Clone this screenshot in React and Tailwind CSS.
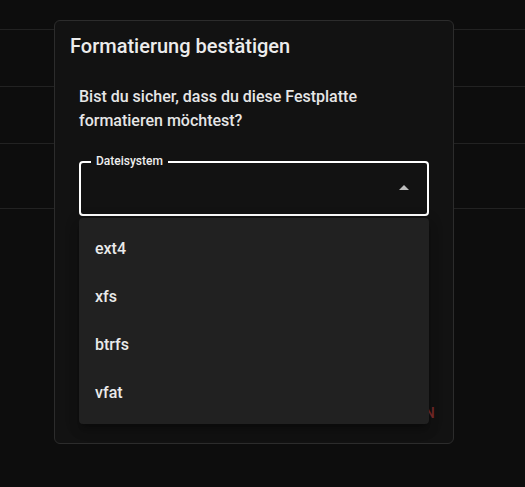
import React from 'react';

const options = ['ext4', 'xfs', 'btrfs', 'vfat'];

function BackgroundRows() {
  return (
    <div className="w-full">
      <div className="h-[30px] border-b border-[#222222]" />
      <div className="h-[57px] border-b border-[#222222]" />
      <div className="h-[57px] border-b border-[#222222]" />
      <div className="h-[65px] border-b border-[#222222]" />
    </div>
  );
}

function Dialog() {
  return (
    <div className="absolute left-[54px] top-[20px] w-[400px] h-[424px] rounded-[6px] border border-[#2c2c2c] bg-[#121212] flex flex-col">
      <h2 className="pl-[15px] pt-[12px] text-[20px] leading-[26px] text-[#ececec] font-medium">
        Formatierung bestätigen
      </h2>
      <p className="pl-[24px] pr-[24px] mt-[26px] text-[16px] leading-[24px] text-[#e6e6e6] font-medium">
        Bist du sicher, dass du diese Festplatte formatieren möchtest?
      </p>
      <div className="relative mx-[24px] mt-[28px] h-[55px] rounded-[4px] border-2 border-white">
        <span className="absolute left-[10px] top-[-10px] px-[5px] bg-[#121212] text-[12px] leading-[16px] text-[#eeeeee] font-medium">
          Dateisystem
        </span>
        <svg
          className="absolute right-[11px] top-[13px]"
          width="24"
          height="24"
          viewBox="0 0 24 24"
          fill="#bdbdbd"
        >
          <path d="M7 14l5-5 5 5z" />
        </svg>
      </div>
      <div className="mt-auto flex justify-end gap-2 pr-[16px] pb-[12px]">
        <button className="h-[36px] px-[8px] text-[14px] font-medium tracking-[0.4px] text-[#9a9a9a]">
          ABBRECHEN
        </button>
        <button className="h-[36px] px-[2px] text-[14px] font-medium tracking-[0.4px] text-[#7a2a2a]">
          FORMATIEREN
        </button>
      </div>
      <div className="absolute left-[24px] top-[197px] w-[350px] rounded-[4px] bg-[#212121] pt-[7px] pb-[7px] shadow-[0_5px_5px_-3px_rgba(0,0,0,0.2),0_8px_10px_1px_rgba(0,0,0,0.14),0_3px_14px_2px_rgba(0,0,0,0.12)]">
        {options.map((o) => (
          <div key={o} className="h-[48px] flex items-center pl-[16px] text-[16px] text-[#eaeaea] font-medium">
            {o}
          </div>
        ))}
      </div>
    </div>
  );
}

export default function App() {
  return (
    <div
      className="relative w-[525px] h-[487px] bg-[#0d0d0d] overflow-hidden"
      style={{ fontFamily: 'Roboto, "Liberation Sans", sans-serif' }}
    >
      <BackgroundRows />
      <Dialog />
    </div>
  );
}
